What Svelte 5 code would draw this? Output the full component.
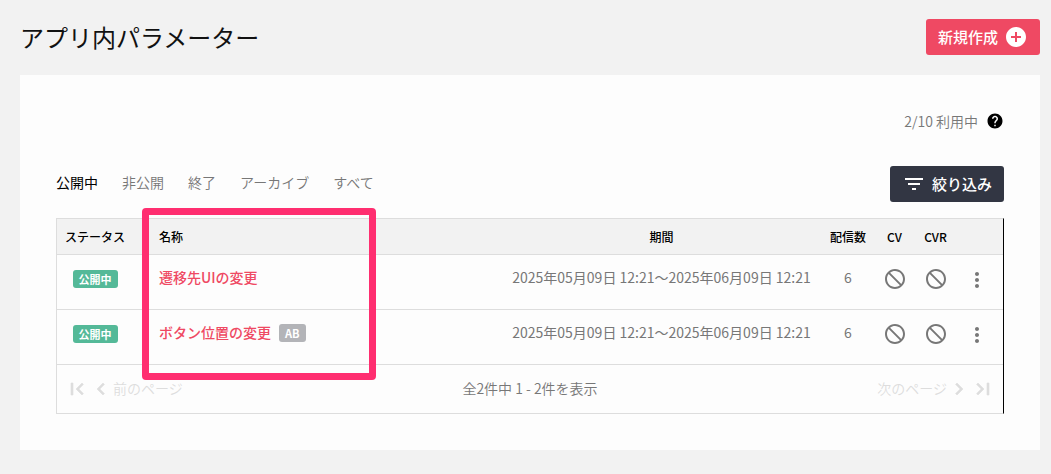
<script lang="ts">
  interface Param {
    id: number
    status: string
    name: string
    ab: boolean
    period: string
    count: number
  }

  const tabs = ['公開中', '非公開', '終了', 'アーカイブ', 'すべて']
  let activeTab = $state('公開中')

  const params: Param[] = [
    { id: 1, status: '公開中', name: '遷移先UIの変更', ab: false, period: '2025年05月09日 12:21〜2025年06月09日 12:21', count: 6 },
    { id: 2, status: '公開中', name: 'ボタン位置の変更', ab: true, period: '2025年05月09日 12:21〜2025年06月09日 12:21', count: 6 },
  ]

  // 24x24 icon paths
  const icons = {
    add: 'M12 2C6.48 2 2 6.48 2 12s4.48 10 10 10 10-4.48 10-10S17.52 2 12 2zm5 11h-4v4h-2v-4H7v-2h4V7h2v4h4v2z',
    help: 'M12 2C6.48 2 2 6.48 2 12s4.48 10 10 10 10-4.48 10-10S17.52 2 12 2zm1 17h-2v-2h2v2zm2.07-7.75l-.9.92C13.45 12.9 13 13.5 13 15h-2v-.5c0-1.1.45-2.1 1.17-2.83l1.24-1.26c.37-.36.59-.86.59-1.41 0-1.1-.9-2-2-2s-2 .9-2 2H8c0-2.21 1.79-4 4-4s4 1.79 4 4c0 .88-.36 1.68-.93 2.25z',
    filter: 'M10 18h4v-2h-4v2zM3 6v2h18V6H3zm3 7h12v-2H6v2z',
    block: 'M12 2C6.48 2 2 6.48 2 12s4.48 10 10 10 10-4.48 10-10S17.52 2 12 2zM4 12c0-1.85.63-3.55 1.69-4.9L16.9 18.31C15.55 19.37 13.85 20 12 20c-4.42 0-8-3.58-8-8zm14.31 4.9L7.1 5.69C8.45 4.63 10.15 4 12 4c4.42 0 8 3.58 8 8 0 1.85-.63 3.55-1.69 4.9z',
    more: 'M12 8c1.1 0 2-.9 2-2s-.9-2-2-2-2 .9-2 2 .9 2 2 2zm0 2c-1.1 0-2 .9-2 2s.9 2 2 2 2-.9 2-2-.9-2-2-2zm0 6c-1.1 0-2 .9-2 2s.9 2 2 2 2-.9 2-2-.9-2-2-2z',
    first: 'M18.41 16.59L13.82 12l4.59-4.59L17 6l-6 6 6 6zM6 6h2v12H6z',
    prev: 'M15.41 7.41L14 6l-6 6 6 6 1.41-1.41L10.83 12z',
    next: 'M10 6L8.59 7.41 13.17 12l-4.58 4.59L10 18l6-6z',
    last: 'M5.59 7.41L10.18 12l-4.59 4.59L7 18l6-6-6-6zM16 6h2v12h-2z',
  }
</script>

{#snippet icon(d: string, size = 24)}
  <svg width={size} height={size} viewBox="0 0 24 24" fill="currentColor" aria-hidden="true"><path {d} /></svg>
{/snippet}

<div class="page">
  <header class="page-header">
    <h1>アプリ内パラメーター</h1>
    <button class="btn primary">新規作成{@render icon(icons.add)}</button>
  </header>

  <main class="card">
    <div class="usage">
      <span>2/10 利用中</span>
      <button class="icon-btn help" aria-label="ヘルプ">{@render icon(icons.help, 18)}</button>
    </div>

    <div class="toolbar">
      <nav class="tabs">
        {#each tabs as tab}
          <button class="tab" class:active={activeTab === tab} onclick={() => (activeTab = tab)}>{tab}</button>
        {/each}
      </nav>
      <button class="btn dark">{@render icon(icons.filter)}絞り込み</button>
    </div>

    <div class="list">
      <table>
        <colgroup>
          <col class="col-status" />
          <col />
          <col class="col-period" />
          <col class="col-count" />
          <col class="col-cv" />
          <col class="col-cv" />
          <col class="col-more" />
        </colgroup>
        <thead>
          <tr>
            <th>ステータス</th>
            <th class="name">名称</th>
            <th>期間</th>
            <th>配信数</th>
            <th>CV</th>
            <th>CVR</th>
            <th></th>
          </tr>
        </thead>
        <tbody>
          {#each params as p (p.id)}
            <tr>
              <td class="status"><span class="badge">{p.status}</span></td>
              <td class="name">
                <div class="name-inner">
                  <a href="#{p.id}">{p.name}</a>
                  {#if p.ab}<span class="badge ab">AB</span>{/if}
                </div>
              </td>
              <td>{p.period}</td>
              <td>{p.count}</td>
              <td class="cv">{@render icon(icons.block)}</td>
              <td class="cv">{@render icon(icons.block)}</td>
              <td class="more"><button class="icon-btn" aria-label="メニュー">{@render icon(icons.more)}</button></td>
            </tr>
          {/each}
        </tbody>
      </table>

      <footer class="pager">
        <div class="pager-side">
          <button disabled aria-label="最初のページ">{@render icon(icons.first)}</button>
          <button disabled>{@render icon(icons.prev)}<span>前のページ</span></button>
        </div>
        <span>全2件中 1 - 2件を表示</span>
        <div class="pager-side end">
          <button disabled><span>次のページ</span>{@render icon(icons.next)}</button>
          <button disabled aria-label="最後のページ">{@render icon(icons.last)}</button>
        </div>
      </footer>

      <div class="highlight"></div>
    </div>
  </main>
</div>

<style>
  :global(body) {
    background: #f2f2f2;
  }

  .page {
    padding: 19px 11px 24px 20px;
    font-family: 'Noto Sans CJK JP', sans-serif;
    font-size: 14px;
    line-height: 20px;
    color: #777;
  }

  svg {
    display: block;
    flex: none;
  }

  button {
    border: none;
    background: none;
    padding: 0;
    font: inherit;
    color: inherit;
    cursor: pointer;
  }

  .icon-btn {
    display: block;
    margin: 0 auto;
  }

  .page-header {
    display: flex;
    justify-content: space-between;
    align-items: center;
    margin-bottom: 20px;
  }

  h1 {
    margin: 0;
    font-size: 24px;
    line-height: 36px;
    font-weight: 400;
    color: #111;
  }

  .btn {
    display: flex;
    align-items: center;
    gap: 6px;
    height: 36px;
    padding: 0 12px;
    border-radius: 3px;
    font-size: 15px;
    font-weight: 500;
    color: #fff;
  }
  .primary { background: #ef4963; }
  .dark { background: #323643; }

  .card {
    padding: 36px;
    background: #fdfdfd;
  }

  .usage {
    display: flex;
    justify-content: flex-end;
    align-items: center;
    gap: 8px;
    margin-bottom: 35px;
    font-weight: 350;
  }

  .help {
    margin: 0;
    color: #000;
  }

  .toolbar {
    display: flex;
    justify-content: space-between;
    align-items: center;
    margin-bottom: 16px;
  }

  .tabs {
    display: flex;
    gap: 24px;
    padding-bottom: 4px;
  }
  .tab { font-weight: 350; }
  .tab.active {
    color: #000;
    font-weight: 400;
  }

  .list {
    position: relative;
    border: 1px solid #ddd;
    border-right-color: #000;
  }

  table {
    width: 100%;
    table-layout: fixed;
    border-collapse: collapse;
  }

  .col-status { width: 76px; }
  .col-period { width: 321px; }
  .col-count { width: 52px; }
  .col-cv { width: 41px; }
  .col-more { width: 47px; }

  tr { border-bottom: 1px solid #ddd; }

  th {
    height: 35px;
    padding: 0;
    background: #f2f2f2;
    font-size: 12px;
    font-weight: 500;
    color: #000;
  }

  td {
    box-sizing: border-box;
    height: 55px;
    padding: 0 0 10px;
    text-align: center;
    white-space: nowrap;
  }
  td svg { margin: 0 auto; }

  .name {
    padding-left: 26px;
    text-align: left;
  }
  .name-inner {
    display: flex;
    align-items: flex-end;
    gap: 8px;
  }

  a {
    color: #ef4963;
    font-weight: 500;
    text-decoration: none;
  }
  a:hover { text-decoration: underline; }

  .badge {
    display: inline-block;
    padding: 0 6px;
    border-radius: 3px;
    background: #54b998;
    font-size: 11px;
    line-height: 18px;
    font-weight: 700;
    color: #fff;
  }
  .ab { background: #b3b4b8; }

  .status { padding-bottom: 8px; }
  .cv { padding-bottom: 6px; }
  .more { padding: 0 6px 4px 0; }

  .pager {
    display: flex;
    align-items: center;
    height: 48px;
    padding: 0 8px;
    font-weight: 350;
  }
  .pager span { padding-bottom: 2px; }

  .pager-side {
    display: flex;
    flex: 1;
  }
  .pager-side button {
    display: flex;
    align-items: center;
    color: #ddd;
    cursor: default;
  }
  .pager-side path {
    stroke: currentColor;
    stroke-width: 0.6;
  }
  .end { justify-content: flex-end; }

  /* frame drawn over the name column */
  .highlight {
    position: absolute;
    top: -11px;
    bottom: 33px;
    left: 85px;
    width: 220px;
    border: 7px solid #ff2e70;
    border-radius: 4px;
    pointer-events: none;
  }
</style>
